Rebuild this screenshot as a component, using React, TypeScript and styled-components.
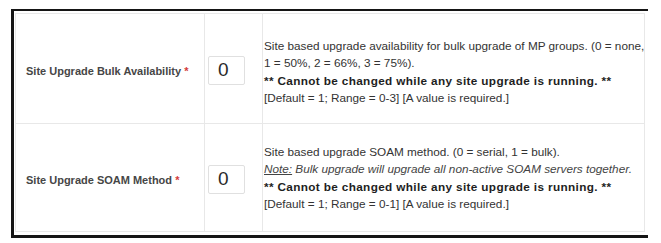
import React from "react";
import styled, { createGlobalStyle } from "styled-components";

const Global = createGlobalStyle`
  html, body { margin: 0; padding: 0; background: #ffffff; }
  body { font-family: "Liberation Sans", Arial, sans-serif; }
`;

const Frame = styled.div`
  margin: 9px 0 0 11px;
  width: 632px;
  border-top: 2px solid #151515;
  border-left: 3px solid #151515;
  border-bottom: 3px solid #151515;
  padding: 2px 1px 3px 1px;
  box-sizing: content-box;
`;

const Table = styled.table`
  width: 630px;
  border-collapse: collapse;
  table-layout: fixed;
  font-family: "Liberation Sans", Arial, sans-serif;
  font-size: 12px;
`;

const Row = styled.tr<{ $h: number }>`
  height: ${(p) => p.$h}px;
`;

const Cell = styled.td`
  border: 1px solid #e8e8e8;
  vertical-align: middle;
  padding: 0;
`;

const LabelCell = styled(Cell)`
  width: 178px;
  padding: 5px 0 0 10px;
  font-size: 11px;
  font-weight: bold;
  color: #464646;
  white-space: nowrap;
`;

const Required = styled.span`
  color: #d43c3c;
`;

const InputCell = styled(Cell)`
  width: 54px;
  padding: 3px 0 0 3px;
`;

const ValueBox = styled.input`
  width: 37px;
  height: 29px;
  box-sizing: border-box;
  border: 1px solid #e0e0e0;
  border-radius: 2px;
  padding: 0 0 0 9px;
  font-family: "Liberation Sans", Arial, sans-serif;
  font-size: 19px;
  color: #2a2a2a;
  background: #fff;
  outline: none;
`;

const DescCell = styled(Cell)<{ $top: number }>`
  padding: ${(p) => p.$top}px 0 0 1px;
  color: #333;
  font-size: 11.75px;
  line-height: 17.5px;
  white-space: nowrap;
`;

const Line = styled.div``;

const Strong = styled.div`
  font-size: 11.75px;
  font-weight: bold;
  letter-spacing: 0.36px;
  color: #1e1e1e;
`;

const NoteLine = styled.div`
  font-style: italic;
  color: #444;
`;

const NoteLabel = styled.span`
  text-decoration: underline;
`;

export default function App() {
  return (
    <>
      <Global />
      <Frame>
        <Table>
          <tbody>
            <Row $h={110}>
              <LabelCell>
                Site Upgrade Bulk Availability <Required>*</Required>
              </LabelCell>
              <InputCell>
                <ValueBox defaultValue="0" />
              </InputCell>
              <DescCell $top={6}>
                <Line>Site based upgrade availability for bulk upgrade of MP groups. (0 = none,</Line>
                <Line>1 = 50%, 2 = 66%, 3 = 75%).</Line>
                <Strong>** Cannot be changed while any site upgrade is running. **</Strong>
                <Line>[Default = 1; Range = 0-3] [A value is required.]</Line>
              </DescCell>
            </Row>
            <Row $h={108}>
              <LabelCell>
                Site Upgrade SOAM Method <Required>*</Required>
              </LabelCell>
              <InputCell>
                <ValueBox defaultValue="0" />
              </InputCell>
              <DescCell $top={0}>
                <Line>Site based upgrade SOAM method. (0 = serial, 1 = bulk).</Line>
                <NoteLine>
                  <NoteLabel>Note:</NoteLabel> Bulk upgrade will upgrade all non-active SOAM servers together.
                </NoteLine>
                <Strong>** Cannot be changed while any site upgrade is running. **</Strong>
                <Line>[Default = 1; Range = 0-1] [A value is required.]</Line>
              </DescCell>
            </Row>
          </tbody>
        </Table>
      </Frame>
    </>
  );
}
